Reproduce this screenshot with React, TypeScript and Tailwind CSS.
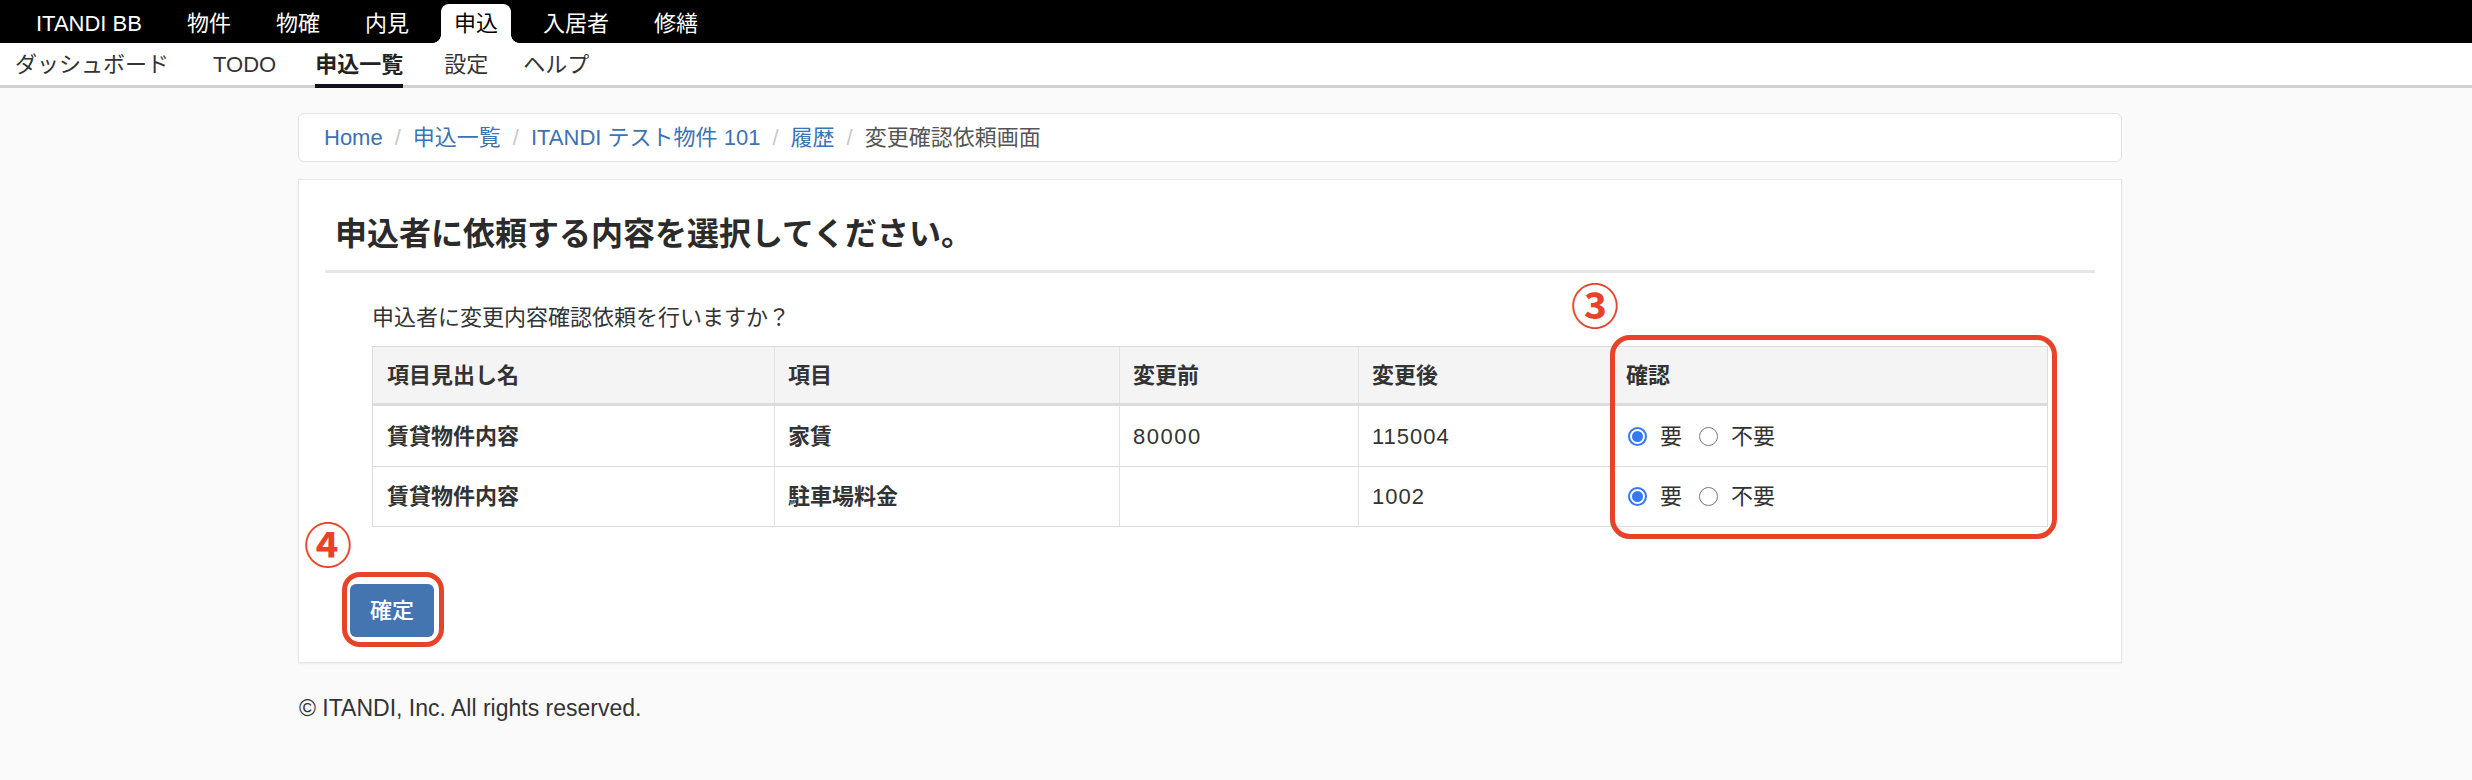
import React from "react";

const FONT = '"Liberation Sans", "Noto Sans CJK JP", sans-serif';

const topNav = ["ITANDI BB", "物件", "物確", "内見", "申込", "入居者", "修繕"];

const subNav = [
  { label: "ダッシュボード", cls: "ml-[15px]" },
  { label: "TODO", cls: "ml-[44px]" },
  { label: "申込一覧", cls: "ml-[39px]", active: true },
  { label: "設定", cls: "ml-[41px]" },
  { label: "ヘルプ", cls: "ml-[35px]" },
];

const crumbs = ["Home", "申込一覧", "ITANDI テスト物件 101", "履歴"];

const rows = [
  { heading: "賃貸物件内容", item: "家賃", before: "80000", after: "115004" },
  { heading: "賃貸物件内容", item: "駐車場料金", before: "", after: "1002" },
];

function Radio({ checked }: { checked: boolean }) {
  return checked ? (
    <span className="shrink-0 w-[19px] h-[19px] rounded-full border-[2px] border-[#3478f6] bg-white flex items-center justify-center">
      <span className="w-[11px] h-[11px] rounded-full bg-[#3478f6]" />
    </span>
  ) : (
    <span className="shrink-0 block w-[19px] h-[19px] rounded-full border-[1.5px] border-[#7a7a7a] bg-white" />
  );
}

export default function App() {
  return (
    <div className="min-h-[780px] bg-[#fafafa] text-[#333]" style={{ fontFamily: FONT }}>
      {/* メインナビ */}
      <div className="h-[43px] bg-black flex items-end pl-[23px] gap-[19px]">
        {topNav.map((label) =>
          label === "申込" ? (
            <div
              key={label}
              className="relative h-[39px] px-[13px] bg-white text-black rounded-t-[8px] flex items-center text-[22px]"
            >
              {label}
              <span className="absolute bottom-0 left-[-8px] w-[8px] h-[8px] bg-[radial-gradient(circle_at_0_0,#000_7.5px,#fff_8px)]" />
              <span className="absolute bottom-0 right-[-8px] w-[8px] h-[8px] bg-[radial-gradient(circle_at_100%_0,#000_7.5px,#fff_8px)]" />
            </div>
          ) : (
            <div key={label} className="h-[39px] px-[13px] flex items-center text-white text-[22px]">
              {label}
            </div>
          )
        )}
      </div>

      {/* サブナビ */}
      <div className="h-[45px] bg-white border-b-[3px] border-[#d2d2d2] flex">
        {subNav.map((s) => (
          <div
            key={s.label}
            className={`relative flex items-center text-[22px] ${s.cls} ${
              s.active ? "font-bold text-[#222]" : "text-[#333]"
            }`}
          >
            {s.label}
            {s.active && <span className="absolute left-0 right-0 bottom-[-3px] h-[4px] bg-[#11111f]" />}
          </div>
        ))}
      </div>

      <div className="ml-[298px] w-[1824px]">
        {/* パンくず */}
        <div className="mt-[25px] h-[49px] bg-white border border-[#e3e3e3] rounded-[6px] flex items-center pl-[25px] text-[22px]">
          {crumbs.map((c) => (
            <React.Fragment key={c}>
              <a className="text-[#3d72b4]">{c}</a>
              <span className="mx-[12px] text-[#c8c8c8]">/</span>
            </React.Fragment>
          ))}
          <span className="text-[#555]">変更確認依頼画面</span>
        </div>

        {/* メインカード */}
        <div className="mt-[17px] bg-white border border-[#e6e6e6] shadow-[0_1px_2px_rgba(0,0,0,0.06)] pt-[34px] px-[26px] pb-[25px]">
          <h2 className="pl-[10px] text-[32px] leading-[40px] font-bold text-[#2b2b2b]">
            申込者に依頼する内容を選択してください。
          </h2>
          <div className="mt-[16px] h-[3px] bg-[#e6e6eb]" />

          <div className="px-[47px]">
            <p className="mt-[30px] text-[22px] leading-[30px]">申込者に変更内容確認依頼を行いますか？</p>

            <div className="relative mt-[13px]">
              <div className="border border-[#dcdcdc] text-[22px]">
                <div className="grid grid-cols-[401px_345px_239px_252px_436px] h-[59px] bg-[#f4f4f4] border-b-[3px] border-[#dcdcdc] font-bold">
                  <div className="flex items-center pl-[14px]">項目見出し名</div>
                  <div className="flex items-center pl-[13px] border-l border-[#e2e2e2]">項目</div>
                  <div className="flex items-center pl-[13px] border-l border-[#e2e2e2]">変更前</div>
                  <div className="flex items-center pl-[13px] border-l border-[#e2e2e2]">変更後</div>
                  <div className="flex items-center pl-[15px] border-l border-[#e2e2e2]">確認</div>
                </div>
                {rows.map((r, i) => (
                  <div
                    key={r.item}
                    className={`grid grid-cols-[401px_345px_239px_252px_436px] h-[60px] ${
                      i > 0 ? "border-t border-[#dcdcdc]" : ""
                    }`}
                  >
                    <div className="flex items-center pl-[14px] font-bold">{r.heading}</div>
                    <div className="flex items-center pl-[13px] border-l border-[#e2e2e2] font-bold">{r.item}</div>
                    <div className="flex items-center pl-[13px] border-l border-[#e2e2e2] tracking-[1.5px]">{r.before}</div>
                    <div className="flex items-center pl-[13px] border-l border-[#e2e2e2] tracking-[1px]">{r.after}</div>
                    <div className="flex items-center pl-[17px] border-l border-[#e2e2e2]">
                      <Radio checked />
                      <span className="ml-[13px]">要</span>
                      <span className="ml-[17px] flex">
                        <Radio checked={false} />
                      </span>
                      <span className="ml-[13px]">不要</span>
                    </div>
                  </div>
                ))}
              </div>

              {/* 注釈 ③ */}
              <span
                className="absolute left-[1199px] top-[-67px] text-[#e8432a] text-[48px] leading-[48px] font-bold"
                style={{ fontFamily: '"Noto Sans CJK JP", sans-serif' }}
              >
                ③
              </span>
              <div className="absolute left-[1238px] top-[-11px] w-[447px] h-[204px] border-[5px] border-[#e8432a] rounded-[20px]" />
            </div>
          </div>

          {/* 確定ボタン */}
          <div className="mt-[57px] pl-[25px]">
            <div className="relative inline-flex">
              <button className="w-[84px] h-[53px] rounded-[6px] bg-[#4475b0] text-white text-[22px] font-medium">
                確定
              </button>
              <div className="absolute left-[-8px] top-[-12px] w-[102px] h-[75px] border-[5px] border-[#e8432a] rounded-[18px]" />
              <span
                className="absolute left-[-46px] top-[-66px] text-[#e8432a] text-[48px] leading-[48px] font-bold"
                style={{ fontFamily: '"Noto Sans CJK JP", sans-serif' }}
              >
                ④
              </span>
            </div>
          </div>
        </div>

        <p className="mt-[30px] text-[23px] leading-[30px] text-[#333] pl-[1px]">© ITANDI, Inc. All rights reserved.</p>
      </div>
    </div>
  );
}
